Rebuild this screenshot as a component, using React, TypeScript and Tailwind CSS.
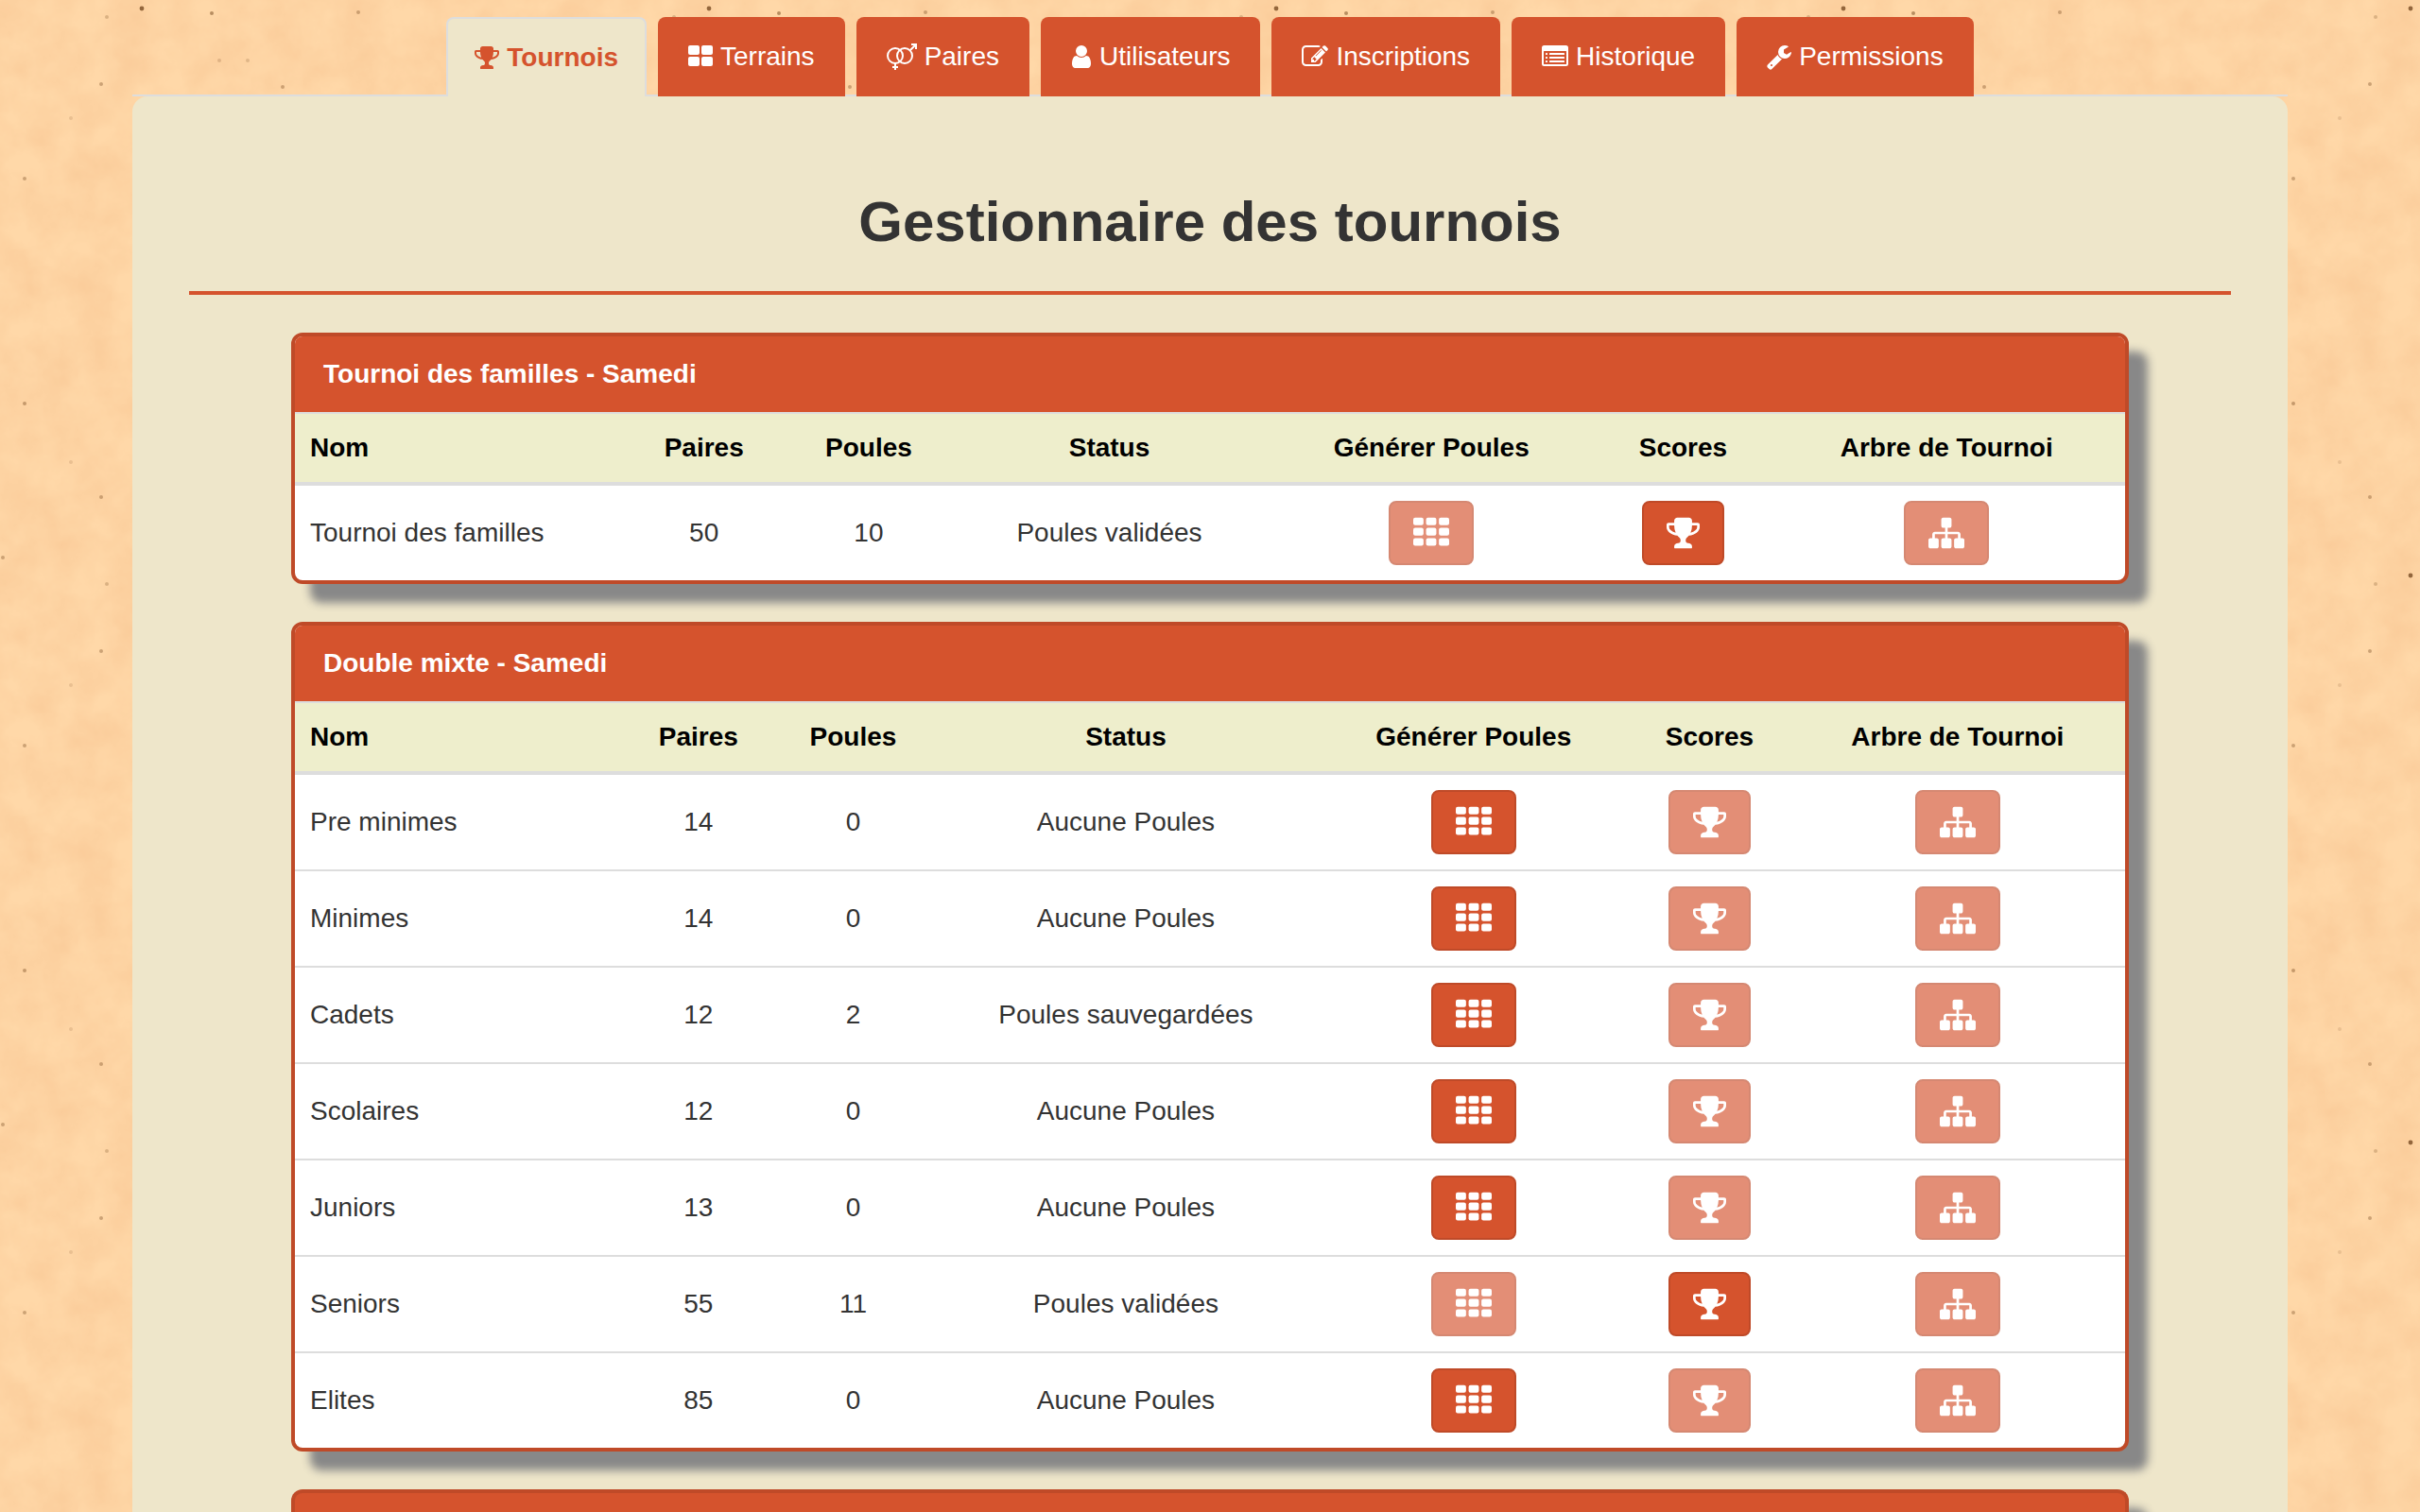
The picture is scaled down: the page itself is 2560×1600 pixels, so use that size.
import React from "react";

const PATHS = {
  trophy:
    "M522 883q-74-162-74-371h-256v96q0 78 94.5 162t235.5 113zm1078-275v-96h-256q0 209-74 371 141-29 235.5-113t94.5-162zm128-128v128q0 71-41.5 143t-112 130-173 97.5-215.5 44.5q-42 54-95 95-38 34-52.5 72.5t-14.5 89.5q0 54 30.5 91t97.5 37q75 0 133.5 45.5t58.5 114.5v64q0 14-9 23t-23 9h-832q-14 0-23-9t-9-23v-64q0-69 58.5-114.5t133.5-45.5q67 0 97.5-37t30.5-91q0-51-14.5-89.5t-52.5-72.5q-53-41-95-95-113-5-215.5-44.5t-173-97.5-112-130-41.5-143v-128q0-40 28-68t68-28h288v-96q0-66 47-113t113-47h576q66 0 113 47t47 113v96h288q40 0 68 28t28 68z",
  user:
    "M1536 1399q0 109-62.5 187t-150.5 78h-854q-88 0-150.5-78t-62.5-187q0-85 8.5-160.5t31.5-152 58.5-131 94-89 134.5-34.5q131 128 313 128t313-128q76 0 134.5 34.5t94 89 58.5 131 31.5 152 8.5 160.5zm-256-887q0 159-112.5 271.5t-271.5 112.5-271.5-112.5-112.5-271.5 112.5-271.5 271.5-112.5 271.5 112.5 112.5 271.5z",
  edit:
    "M888 1184l116-116-152-152-116 116v56h96v96h56zm440-720q-16-16-33 1l-350 350q-17 17-1 33t33-1l350-350q17-17 1-33zm80 594v190q0 119-84.5 203.5t-203.5 84.5h-832q-119 0-203.5-84.5t-84.5-203.5v-832q0-119 84.5-203.5t203.5-84.5h832q63 0 117 25 15 7 18 23 3 17-9 29l-49 49q-14 14-32 8-23-6-45-6h-832q-66 0-113 47t-47 113v832q0 66 47 113t113 47h832q66 0 113-47t47-113v-126q0-13 9-22l64-64q15-15 35-7t20 29zm-96-738l288 288-672 672h-288v-288zm444 132l-92 92-288-288 92-92q28-28 68-28t68 28l152 152q28 28 28 68t-28 68z",
  wrench:
    "M448 1472q0-26-19-45t-45-19-45 19-19 45 19 45 45 19 45-19 19-45zm644-420l-682 682q-37 37-90 37-52 0-91-37l-106-108q-38-36-38-90 0-53 38-91l681-681q39 98 114.5 173.5t173.5 114.5zm634-435q0 39-23 106-47 134-164.5 217.5t-258.5 83.5q-185 0-316.5-131.5t-131.5-316.5 131.5-316.5 316.5-131.5q58 0 121.5 16.5t107.5 46.5q16 11 16 28t-16 28l-293 169v224l193 107q5-3 79-48.5t135.5-81 70.5-35.5q15 0 23.5 10t8.5 25z",
  sitemap:
    "M1792 1248v320q0 40-28 68t-68 28h-320q-40 0-68-28t-28-68v-320q0-40 28-68t68-28h96v-192h-512v192h96q40 0 68 28t28 68v320q0 40-28 68t-68 28h-320q-40 0-68-28t-28-68v-320q0-40 28-68t68-28h96v-192h-512v192h96q40 0 68 28t28 68v320q0 40-28 68t-68 28h-320q-40 0-68-28t-28-68v-320q0-40 28-68t68-28h96v-192q0-52 38-90t90-38h512v-192h-96q-40 0-68-28t-28-68v-320q0-40 28-68t68-28h320q40 0 68 28t28 68v320q0 40-28 68t-68 28h-96v192h512q52 0 90 38t38 90v192h96q40 0 68 28t28 68z",
};

type IconProps = { className?: string };

const TrophyIcon = ({ className }: IconProps) => (
  <svg viewBox="64 0 1664 1792" fill="currentColor" className={className} aria-hidden="true">
    <path d={PATHS.trophy} />
  </svg>
);

const UserIcon = ({ className }: IconProps) => (
  <svg viewBox="256 0 1280 1792" fill="currentColor" className={className} aria-hidden="true">
    <path d={PATHS.user} />
  </svg>
);

const EditIcon = ({ className }: IconProps) => (
  <svg viewBox="0 0 1792 1792" fill="currentColor" className={className} aria-hidden="true">
    <path d={PATHS.edit} />
  </svg>
);

const WrenchIcon = ({ className }: IconProps) => (
  <svg viewBox="64 0 1664 1792" fill="currentColor" className={className} aria-hidden="true">
    <path d={PATHS.wrench} />
  </svg>
);

const SitemapIcon = ({ className }: IconProps) => (
  <svg viewBox="0 0 1792 1792" fill="currentColor" className={className} aria-hidden="true">
    <path d={PATHS.sitemap} />
  </svg>
);

const LargeGridIcon = ({ className }: IconProps) => (
  <svg viewBox="64 0 1664 1792" fill="currentColor" className={className} aria-hidden="true">
    <rect x="64" y="128" width="768" height="640" rx="128" />
    <rect x="960" y="128" width="768" height="640" rx="128" />
    <rect x="64" y="896" width="768" height="640" rx="128" />
    <rect x="960" y="896" width="768" height="640" rx="128" />
  </svg>
);

const GridIcon = ({ className }: IconProps) => (
  <svg viewBox="0 0 1792 1792" fill="currentColor" className={className} aria-hidden="true">
    {[128, 640, 1152].map((y) =>
      [0, 640, 1280].map((x) => <rect key={`${x}-${y}`} x={x} y={y} width="512" height="384" rx="96" />),
    )}
  </svg>
);

const ListIcon = ({ className }: IconProps) => (
  <svg viewBox="0 0 1792 1792" fill="currentColor" className={className} aria-hidden="true">
    <path
      fillRule="evenodd"
      d="M160 128h1472q160 0 160 160v1088q0 160-160 160h-1472q-160 0-160-160v-1088q0-160 160-160zM160 512q-32 0-32 32v832q0 32 32 32h1472q32 0 32-32v-832q0-32-32-32z"
    />
    {[640, 896, 1152].map((y) => (
      <g key={y}>
        <rect x="256" y={y} width="128" height="128" rx="32" />
        <rect x="512" y={y} width="1024" height="128" rx="32" />
      </g>
    ))}
  </svg>
);

const VenusMarsIcon = ({ className }: IconProps) => (
  <svg viewBox="0 0 32 28" fill="none" stroke="currentColor" strokeWidth="2" className={className} aria-hidden="true">
    <circle cx="9" cy="13" r="8" />
    <circle cx="19" cy="13" r="8" />
    <path d="M9 21v7M6 25h6M25 7l6-6M26 1h5v5" />
  </svg>
);

type Tab = { label: string; Icon: (p: IconProps) => React.ReactElement; size: string; active?: boolean };

const TABS: Tab[] = [
  { label: "Tournois", Icon: TrophyIcon, size: "w-[26px]", active: true },
  { label: "Terrains", Icon: LargeGridIcon, size: "w-[26px]" },
  { label: "Paires", Icon: VenusMarsIcon, size: "w-8" },
  { label: "Utilisateurs", Icon: UserIcon, size: "w-[22px]" },
  { label: "Inscriptions", Icon: EditIcon, size: "w-7" },
  { label: "Historique", Icon: ListIcon, size: "w-7" },
  { label: "Permissions", Icon: WrenchIcon, size: "w-[26px]" },
];

type Row = { name: string; pairs: number; pools: number; status: string; ready: "pools" | "scores" };
type Category = { title: string; columns: string[]; rows: Row[] };

const CATEGORIES: Category[] = [
  {
    title: "Tournoi des familles - Samedi",
    columns: ["w-[18%]", "w-[8.7%]", "w-[9.3%]", "w-[17%]", "w-[18.2%]", "w-[9.3%]", "w-[19.5%]"],
    rows: [{ name: "Tournoi des familles", pairs: 50, pools: 10, status: "Poules validées", ready: "scores" }],
  },
  {
    title: "Double mixte - Samedi",
    columns: ["w-[18%]", "w-[8.1%]", "w-[8.8%]", "w-[21%]", "w-[17%]", "w-[8.8%]", "w-[18.3%]"],
    rows: [
      { name: "Pre minimes", pairs: 14, pools: 0, status: "Aucune Poules", ready: "pools" },
      { name: "Minimes", pairs: 14, pools: 0, status: "Aucune Poules", ready: "pools" },
      { name: "Cadets", pairs: 12, pools: 2, status: "Poules sauvegardées", ready: "pools" },
      { name: "Scolaires", pairs: 12, pools: 0, status: "Aucune Poules", ready: "pools" },
      { name: "Juniors", pairs: 13, pools: 0, status: "Aucune Poules", ready: "pools" },
      { name: "Seniors", pairs: 55, pools: 11, status: "Poules validées", ready: "scores" },
      { name: "Elites", pairs: 85, pools: 0, status: "Aucune Poules", ready: "pools" },
    ],
  },
];

const HEADERS = ["Paires", "Poules", "Status", "Générer Poules", "Scores", "Arbre de Tournoi"];

function ActionButton({ label, disabled, children }: { label: string; disabled: boolean; children: React.ReactNode }) {
  return (
    <button
      type="button"
      aria-label={label}
      disabled={disabled}
      className="inline-flex h-[68px] items-center justify-center rounded-lg border-2 border-[#bf4a28] bg-[#d5532d] px-6 align-middle text-white disabled:opacity-65"
    >
      {children}
    </button>
  );
}

function CategoryPanel({ category }: { category: Category }) {
  return (
    <section className="mx-[5%] mb-10 overflow-hidden rounded-xl border-4 border-[#bf4a28] bg-white shadow-[20px_20px_10px_#888888]">
      <h2 className="bg-[#d5532d] px-[30px] py-5 text-[28px] leading-10 font-bold text-white">{category.title}</h2>
      <table className="w-full table-fixed border-t-2 border-[#dddddd] text-center leading-10">
        <colgroup>
          {category.columns.map((w, i) => (
            <col key={i} className={w} />
          ))}
        </colgroup>
        <thead className="bg-[#eeeecc] text-black">
          <tr className="border-b-4 border-[#dddddd]">
            <th scope="col" className="p-4 text-left">
              Nom
            </th>
            {HEADERS.map((h) => (
              <th key={h} scope="col" className="py-4 whitespace-nowrap">
                {h}
              </th>
            ))}
          </tr>
        </thead>
        <tbody className="divide-y-2 divide-[#dddddd]">
          {category.rows.map((r) => (
            <tr key={r.name}>
              <td className="p-4 text-left">{r.name}</td>
              <td>{r.pairs}</td>
              <td>{r.pools}</td>
              <td>{r.status}</td>
              <td className="py-4">
                <ActionButton label={`Générer les poules, ${r.name}`} disabled={r.ready !== "pools"}>
                  <GridIcon className="size-[38px]" />
                </ActionButton>
              </td>
              <td>
                <ActionButton label={`Scores, ${r.name}`} disabled={r.ready !== "scores"}>
                  <TrophyIcon className="h-[38px] w-[35px]" />
                </ActionButton>
              </td>
              <td>
                <ActionButton label={`Arbre de tournoi, ${r.name}`} disabled>
                  <SitemapIcon className="size-[38px]" />
                </ActionButton>
              </td>
            </tr>
          ))}
        </tbody>
      </table>
    </section>
  );
}

const SPECKS = [
  [150, 9, 2.4, 0.75],
  [224, 14, 2, 0.5],
  [379, 13, 2, 0.35],
  [113, 18, 2, 0.25],
  [232, 64, 2, 0.2],
  [262, 64, 2, 0.2],
  [107, 89, 2, 0.35],
  [299, 92, 2, 0.35],
  [75, 125, 2, 0.15],
  [26, 189, 2, 0.35],
  [26, 427, 2, 0.4],
  [75, 489, 2, 0.15],
  [107, 526, 2, 0.35],
  [3, 590, 2, 0.35],
];

function PaperBackground() {
  return (
    <svg className="absolute inset-0 -z-10 h-full w-full" aria-hidden="true">
      <defs>
        <filter id="grain" x="0" y="0" width="100%" height="100%" colorInterpolationFilters="sRGB">
          <feTurbulence type="fractalNoise" baseFrequency="0.025" numOctaves="5" seed="4" stitchTiles="stitch" />
          <feColorMatrix values="0 0 0 0 0.97  0 0 0 0 0.77  0 0 0 0 0.57  0.9 0 0 0 -0.22" />
        </filter>
        <pattern id="paper" width="600" height="600" patternUnits="userSpaceOnUse">
          <rect width="600" height="600" fill="#ffd8a8" />
          <rect width="600" height="600" filter="url(#grain)" />
          {SPECKS.map(([x, y, r, o]) => (
            <circle key={`${x}-${y}`} cx={x} cy={y} r={r} fill="#70431a" opacity={o} />
          ))}
        </pattern>
      </defs>
      <rect width="100%" height="100%" fill="url(#paper)" />
    </svg>
  );
}

export default function App() {
  return (
    <div className="relative isolate h-screen overflow-hidden bg-[#ffd5a5] font-['Liberation_Sans',Arial,sans-serif] text-[28px] text-[#333333]">
      <PaperBackground />
      <div className="mx-auto w-full max-w-[2280px]">
        <nav aria-label="Sections" className="flex justify-center gap-3 border-b-2 border-[#dddddd] pt-[18px]">
          {TABS.map(({ label, Icon, size, active }) => (
            <a
              key={label}
              href="#"
              aria-current={active ? "page" : undefined}
              className={
                active
                  ? "-mb-0.5 flex h-[84px] items-center gap-2 rounded-t-lg border-2 border-b-0 border-[#dddddd] bg-[#eee6ca] px-7 font-bold text-[#d5532d]"
                  : "-mb-0.5 flex h-[84px] items-center gap-2 rounded-t-lg bg-[#d5532d] px-8 text-white"
              }
            >
              <Icon className={`h-7 ${size}`} />
              <span>{label}</span>
            </a>
          ))}
        </nav>
        <main className="rounded-t-2xl bg-[#eee6ca] px-[60px] pt-[100px]">
          <h1 className="pb-10 text-center text-[60px] leading-[66px] font-bold">Gestionnaire des tournois</h1>
          <hr className="mb-10 border-t-4 border-[#d5532d]" />
          {CATEGORIES.map((c) => (
            <CategoryPanel key={c.title} category={c} />
          ))}
          <section className="mx-[5%] overflow-hidden rounded-t-xl border-4 border-b-0 border-[#bf4a28] bg-[#d5532d] shadow-[20px_20px_10px_#888888]">
            <div className="h-20" />
          </section>
        </main>
      </div>
    </div>
  );
}
